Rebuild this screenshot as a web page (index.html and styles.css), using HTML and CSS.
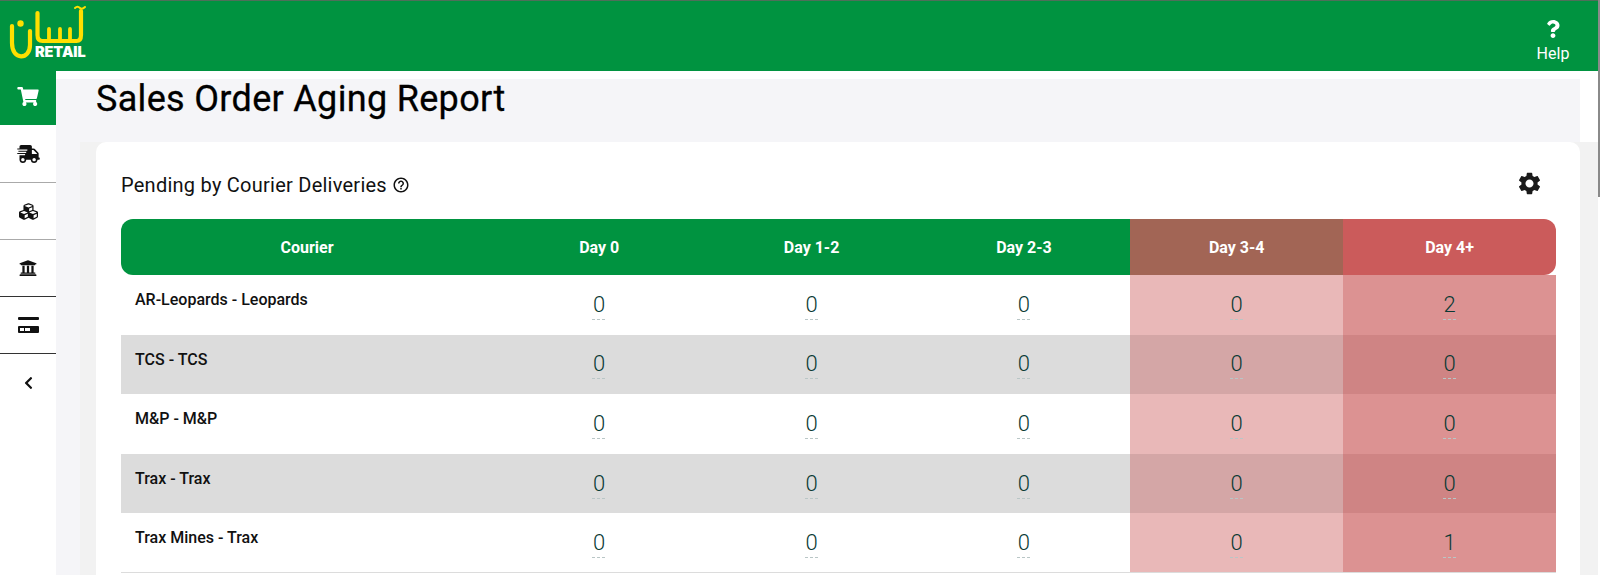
FILE: index.html
```html
<!DOCTYPE html>
<html lang="en">
<head>
    <meta charset="UTF-8">
    <meta name="viewport" content="width=device-width, initial-scale=1.0">
    <title>Sales Order Aging Report</title>
    <link rel="stylesheet" href="styles.css">
</head>
<body>
    <header class="topbar">
        <div class="logo">
            <svg class="logo-mark" width="90" height="60" viewBox="0 0 90 60" fill="none" stroke="#ffdf00" stroke-width="4.200" stroke-linecap="round" stroke-linejoin="round">
                <path d="M12 26v17c0 18 18 17 18 2V31"/>
                <path d="M37.500 13v22c0 4 2 6 5 6h34c3 0 4.500-2 4.500-6V11"/>
                <path d="M49 29v10M60 29v10M70 29v10" stroke-width="3.800"/>
                <path d="M75 8c2-2 4-1 5 0s3 1 5-1" stroke-width="2"/>
                <circle cx="20.500" cy="23.500" r="3.200" fill="#ffdf00" stroke="none"/>
            </svg>
            <span class="logo-word">RETAIL</span>
        </div>
        <a class="help" href="#">
            <svg width="14" height="18" viewBox="0 0 384 512" fill="#fff"><path d="M202.021 0C122.202 0 70.503 32.703 29.914 91.026c-7.363 10.58-5.093 25.086 5.178 32.874l43.138 32.709c10.373 7.865 25.132 6.026 33.253-4.148 25.049-31.381 43.63-49.449 82.757-49.449 30.764 0 68.816 19.799 68.816 49.631 0 22.552-18.617 34.134-48.993 51.164-35.423 19.86-82.299 44.576-82.299 106.405V320c0 13.255 10.745 24 24 24h72.471c13.255 0 24-10.745 24-24v-5.773c0-42.86 125.268-44.645 125.268-160.627C377.504 66.256 286.902 0 202.021 0zM192 373.459c-38.196 0-69.271 31.075-69.271 69.271 0 38.195 31.075 69.27 69.271 69.27s69.271-31.075 69.271-69.271-31.075-69.27-69.271-69.27z"/></svg>
            <span>Help</span>
        </a>
    </header>

    <div class="layout">
        <nav class="sidebar">
            <a class="nav-item active" href="#">
                <svg class="cart" width="22" height="19" viewBox="0 0 576 512" fill="#fff"><path d="M528.12 301.319l47.273-208C578.806 78.301 567.391 64 551.99 64H159.208l-9.166-44.81C147.758 8.021 137.93 0 126.529 0H24C10.745 0 0 10.745 0 24v16c0 13.255 10.745 24 24 24h69.883l70.248 343.435C147.325 417.1 136 435.222 136 456c0 30.928 25.072 56 56 56s56-25.072 56-56c0-15.674-6.447-29.835-16.824-40h209.647C430.447 426.165 424 440.326 424 456c0 30.928 25.072 56 56 56s56-25.072 56-56c0-22.172-12.888-41.332-31.579-50.405l5.517-24.276c3.413-15.018-8.002-29.319-23.403-29.319H218.117l-6.545-32h293.145c11.206 0 20.92-7.754 23.403-18.681z"/></svg>
            </a>
            <a class="nav-item light first" href="#">
                <svg width="23" height="18" viewBox="0 0 640 512" fill="#111"><path d="M624 352h-16V243.9c0-12.7-5.1-24.9-14.1-33.9L494 110.1c-9-9-21.2-14.1-33.9-14.1H416V48c0-26.5-21.5-48-48-48H112C85.5 0 64 21.5 64 48v48H8c-4.4 0-8 3.600-8 8v16c0 4.400 3.600 8 8 8h272c4.400 0 8 3.600 8 8v16c0 4.400-3.600 8-8 8H40c-4.400 0-8 3.600-8 8v16c0 4.400 3.600 8 8 8h208c4.400 0 8 3.600 8 8v16c0 4.400-3.600 8-8 8H8c-4.400 0-8 3.600-8 8v16c0 4.400 3.600 8 8 8h208c4.400 0 8 3.600 8 8v16c0 4.400-3.600 8-8 8H64v128c0 53 43 96 96 96s96-43 96-96h128c0 53 43 96 96 96s96-43 96-96h48c8.800 0 16-7.200 16-16v-32c0-8.800-7.200-16-16-16zM160 464c-26.500 0-48-21.500-48-48s21.500-48 48-48 48 21.500 48 48-21.500 48-48 48zm320 0c-26.500 0-48-21.500-48-48s21.500-48 48-48 48 21.500 48 48-21.500 48-48 48zm80-208H416V144h44.100l99.900 99.900V256z"/></svg>
            </a>
            <a class="nav-item light" href="#">
                <svg width="19" height="19" viewBox="0 0 512 512" fill="#111"><path d="M488.6 250.2L392 214V105.500c0-15-9.300-28.400-23.400-33.700l-100-37.500c-8.100-3.100-17.100-3.100-25.300 0l-100 37.500c-14.100 5.300-23.400 18.700-23.400 33.700V214l-96.600 36.200C9.300 255.500 0 268.900 0 283.900V394c0 13.600 7.700 26.100 19.900 32.200l100 50c10.100 5.100 22.100 5.100 32.200 0l103.900-52 103.900 52c10.100 5.100 22.100 5.100 32.200 0l100-50c12.200-6.100 19.900-18.600 19.900-32.200V283.900c0-15-9.300-28.400-23.400-33.700zM358 214.800l-85 31.900v-68.200l85-37v73.300zM154 104.100l102-38.200 102 38.200v.6l-102 41.400-102-41.400v-.6zm84 291.100l-85 42.500v-79.100l85-38.800v75.400zm0-112l-102 41.400-102-41.400v-.6l102-38.200 102 38.200v.6zm240 112l-85 42.500v-79.100l85-38.800v75.400zm0-112l-102 41.400-102-41.400v-.6l102-38.200 102 38.200v.6z"/></svg>
            </a>
            <a class="nav-item" href="#">
                <svg width="18" height="18" viewBox="0 0 512 512" fill="#111"><path d="M496 128v16a8 8 0 0 1-8 8h-24v12c0 6.627-5.373 12-12 12H60c-6.627 0-12-5.373-12-12v-12H24a8 8 0 0 1-8-8v-16a8 8 0 0 1 4.941-7.392l232-88a7.996 7.996 0 0 1 6.118 0l232 88A8 8 0 0 1 496 128zm-24 304H40c-13.255 0-24 10.745-24 24v16a8 8 0 0 0 8 8h464a8 8 0 0 0 8-8v-16c0-13.255-10.745-24-24-24zM96 192v192H60c-6.627 0-12 5.373-12 12v20h416v-20c0-6.627-5.373-12-12-12h-36V192h-64v192h-64V192h-64v192h-64V192H96z"/></svg>
            </a>
            <a class="nav-item" href="#">
                <svg width="21" height="16" viewBox="0 0 21 16" fill="#111"><rect x="0" y="0" width="21" height="3" rx="1"/><path fill-rule="evenodd" d="M1 9h19a1 1 0 0 1 1 1v5a1 1 0 0 1-1 1H1a1 1 0 0 1-1-1v-5a1 1 0 0 1 1-1zM2 11v3h4v-3zM7 11v3h5v-3z"/></svg>
            </a>
            <a class="nav-item last" href="#">
                <svg width="11" height="14" viewBox="0 0 320 512" fill="#111"><path d="M34.52 239.03L228.87 44.690c9.370-9.370 24.570-9.370 33.940 0l22.670 22.670c9.360 9.360 9.370 24.520.04 33.900L131.490 256l154.020 154.750c9.340 9.380 9.320 24.540-.04 33.900l-22.670 22.670c-9.370 9.370-24.570 9.370-33.940 0L34.520 272.970c-9.370-9.370-9.370-24.570 0-33.940z"/></svg>
            </a>
        </nav>

        <main class="content">
            <div class="page-head">
                <h1>Sales Order Aging Report</h1>
            </div>
            <div class="page-body">
                <section class="card">
                    <div class="card-head">
                        <h2>Pending by Courier Deliveries
                            <svg width="18" height="18" viewBox="0 0 24 24" fill="#111"><path d="M11 18h2v-2h-2v2zm1-16C6.480 2 2 6.480 2 12s4.480 10 10 10 10-4.480 10-10S17.520 2 12 2zm0 18c-4.410 0-8-3.590-8-8s3.590-8 8-8 8 3.590 8 8-3.590 8-8 8zm0-14c-2.210 0-4 1.790-4 4h2c0-1.100.9-2 2-2s2 .9 2 2c0 2-3 1.750-3 5h2c0-2.250 3-2.500 3-5 0-2.210-1.790-4-4-4z"/></svg>
                        </h2>
                        <svg class="gear" width="27" height="27" viewBox="0 0 24 24" fill="#1a1a1a"><path d="M19.140 12.940c.04-.3.06-.61.06-.94 0-.32-.02-.64-.07-.94l2.030-1.580c.18-.14.23-.41.12-.61l-1.920-3.320c-.12-.22-.37-.29-.59-.22l-2.390.96c-.5-.38-1.030-.7-1.620-.94l-.36-2.540c-.04-.24-.24-.41-.48-.41h-3.840c-.24 0-.43.17-.47.41l-.36 2.540c-.59.24-1.130.57-1.620.94l-2.390-.96c-.22-.08-.47 0-.59.22L2.740 8.870c-.12.21-.08.47.12.61l2.030 1.580c-.05.3-.09.63-.09.94s.02.64.07.94l-2.030 1.580c-.18.14-.23.41-.12.61l1.920 3.320c.12.22.37.29.59.22l2.390-.96c.5.38 1.030.7 1.620.94l.36 2.540c.05.24.24.41.48.41h3.840c.24 0 .44-.17.47-.41l.36-2.540c.59-.24 1.130-.56 1.620-.94l2.390.96c.22.08.47 0 .59-.22l1.920-3.320c.12-.22.07-.47-.12-.61l-2.010-1.580zM12 15.600c-1.980 0-3.600-1.620-3.600-3.600s1.620-3.600 3.600-3.600 3.600 1.620 3.600 3.600-1.620 3.600-3.600 3.600z"/></svg>
                    </div>

                    <table class="aging">
                        <thead>
                            <tr>
                                <th class="col-name">Courier</th>
                                <th class="day">Day 0</th>
                                <th class="day">Day 1-2</th>
                                <th class="day">Day 2-3</th>
                                <th class="warn">Day 3-4</th>
                                <th class="late">Day 4+</th>
                            </tr>
                        </thead>
                        <tbody>
                            <tr>
                                <td class="name">AR-Leopards - Leopards</td>
                                <td><span class="num">0</span></td>
                                <td><span class="num">0</span></td>
                                <td><span class="num">0</span></td>
                                <td class="warn"><span class="num">0</span></td>
                                <td class="late"><span class="num">2</span></td>
                            </tr>
                            <tr>
                                <td class="name">TCS - TCS</td>
                                <td><span class="num">0</span></td>
                                <td><span class="num">0</span></td>
                                <td><span class="num">0</span></td>
                                <td class="warn"><span class="num">0</span></td>
                                <td class="late"><span class="num">0</span></td>
                            </tr>
                            <tr>
                                <td class="name">M&amp;P - M&amp;P</td>
                                <td><span class="num">0</span></td>
                                <td><span class="num">0</span></td>
                                <td><span class="num">0</span></td>
                                <td class="warn"><span class="num">0</span></td>
                                <td class="late"><span class="num">0</span></td>
                            </tr>
                            <tr>
                                <td class="name">Trax - Trax</td>
                                <td><span class="num">0</span></td>
                                <td><span class="num">0</span></td>
                                <td><span class="num">0</span></td>
                                <td class="warn"><span class="num">0</span></td>
                                <td class="late"><span class="num">0</span></td>
                            </tr>
                            <tr>
                                <td class="name">Trax Mines - Trax</td>
                                <td><span class="num">0</span></td>
                                <td><span class="num">0</span></td>
                                <td><span class="num">0</span></td>
                                <td class="warn"><span class="num">0</span></td>
                                <td class="late"><span class="num">1</span></td>
                            </tr>
                        </tbody>
                    </table>
                </section>
            </div>
        </main>
    </div>
    <div class="scrollbar"></div>
</body>
</html>
```

FILE: styles.css
```css
html, body {
    height: 575px;
    overflow: hidden;
}
body {
    margin: 0;
    font-family: Roboto, "Liberation Sans", sans-serif;
    background-color: #fff;
    color: #111;
}
a {
    text-decoration: none;
    color: inherit;
}

/* top bar */
.topbar {
    height: 70px;
    background-color: #009340;
    border-top: 1px solid #4f6f5a;
    display: flex;
    justify-content: space-between;
    position: relative;
}
.logo {
    position: relative;
    width: 90px;
}
.logo-mark {
    display: block;
    margin-top: -1px;
}
.logo-word {
    position: absolute;
    left: 35px;
    top: 43px;
    color: #fff;
    font-family: Inter, Roboto, sans-serif;
    font-weight: 900;
    font-size: 14.5px;
    line-height: 16px;
    letter-spacing: -0.1px;
}
.help {
    width: 60px;
    margin-right: 17px;
    color: #fff;
    font-size: 16px;
    display: flex;
    flex-direction: column;
    align-items: center;
    padding-top: 19px;
    gap: 6px;
    line-height: 19px;
}

/* sidebar */
.layout {
    display: flex;
    height: 504px;
}
.sidebar {
    width: 56px;
    flex-shrink: 0;
    display: flex;
    flex-direction: column;
}
.nav-item {
    height: 57px;
    display: flex;
    align-items: center;
    justify-content: center;
    border-bottom: 1px solid #333;
    box-sizing: border-box;
}
.nav-item.active {
    height: 54px;
    background-color: #009340;
    border-bottom: none;
}
.cart {
    margin-top: -4px;
}
.nav-item.light {
    border-bottom: 1px solid #aaa;
}
.nav-item.first {
    height: 58px;
}
.nav-item.last {
    border-bottom: none;
}

/* main area */
.content {
    flex: 1;
    min-width: 0;
    padding-top: 8px;
}
.page-head {
    width: 1524px;
    height: 63px;
    background-color: #f5f5f8;
    padding-left: 40px;
    box-sizing: border-box;
}
h1 {
    margin: 0;
    font-size: 36px;
    font-weight: 400;
    letter-spacing: 0.32px;
    line-height: 40px;
    color: #000;
    -webkit-text-stroke: 0.3px #000;
}
.page-body {
    margin-left: 24px;
    margin-right: 2px;
    padding-left: 16px;
    padding-right: 18px;
    background-color: #f2f2f2;
    box-shadow: -24px 0 0 #f5f5f8;
    height: 450px;
}
.card {
    background: white;
    border-radius: 10px 10px 0 0;
    padding: 0 24px 0 25px;
    height: 450px;
    box-sizing: border-box;
}
.card-head {
    height: 77px;
    display: flex;
    align-items: center;
    justify-content: space-between;
    padding-right: 13px;
}
h2 {
    margin: 0;
    padding-top: 9px;
    font-size: 20px;
    font-weight: 400;
    letter-spacing: 0.25px;
    display: flex;
    align-items: center;
    gap: 5px;
}
.gear {
    margin-top: 5px;
}

/* table */
.aging {
    width: 1435px;
    table-layout: fixed;
    border-collapse: separate;
    border-spacing: 0;
}
.aging th {
    height: 56px;
    background-color: #009340;
    color: #fff;
    font-size: 16px;
    font-weight: 700;
    padding: 0;
}
.aging th.col-name {
    width: 372px;
    border-radius: 12px 0 0 12px;
}
.aging th.day {
    width: 212.4px;
}
.aging th.warn {
    width: 213px;
    background-color: #a26555;
}
.aging th.late {
    background-color: #cb5b5b;
    border-radius: 0 12px 12px 0;
}
.aging td {
    height: 59.6px;
    padding: 3px 0 0;
    box-sizing: border-box;
    text-align: center;
    vertical-align: middle;
}
.aging td.name {
    text-align: left;
    vertical-align: top;
    padding: 15px 0 0 14px;
    font-size: 16px;
    font-weight: 500;
    line-height: 20px;
    color: #111;
}
.aging tbody tr:nth-child(even) td {
    background-color: #dcdcdc;
}
.aging td.warn {
    background-color: #e9b8b8;
}
.aging td.late {
    background-color: #dc9292;
}
.aging tbody tr:nth-child(even) td.warn {
    background-color: #d4a6a6;
}
.aging tbody tr:nth-child(even) td.late {
    background-color: #cf8484;
}
.aging tbody tr:last-child td {
    border-bottom: 1px solid #dcdcdc;
}
.num {
    display: inline-block;
    min-width: 14px;
    padding-bottom: 3px;
    font-size: 22px;
    font-weight: 300;
    line-height: 24px;
    color: #0a3a35;
    background-image: repeating-linear-gradient(90deg, #b9c6c6 0 3px, transparent 3px 5px);
    background-size: 100% 1px;
    background-position: bottom;
    background-repeat: no-repeat;
}

.scrollbar {
    position: absolute;
    top: 0;
    right: 0;
    width: 2px;
    height: 197px;
    background-color: #8a8a8a;
}
```
